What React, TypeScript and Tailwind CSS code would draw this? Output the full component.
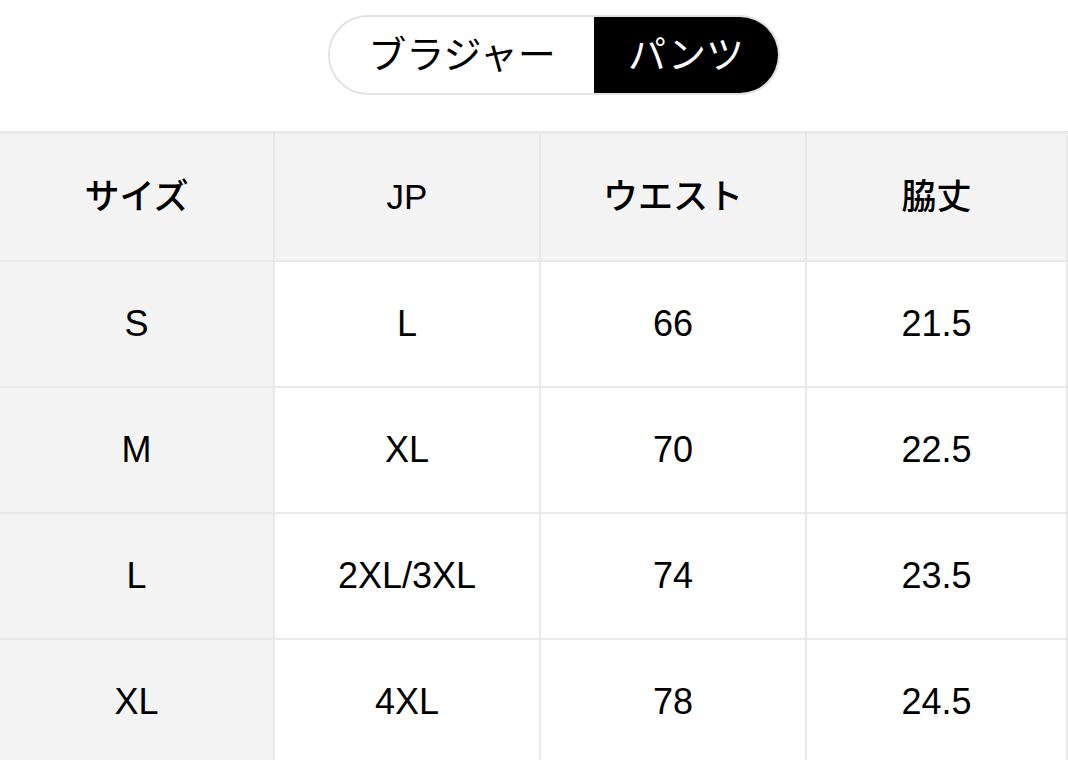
import { useState } from 'react';

type Row = { size: string; jp: string; waist: string; side: string };

const rows: Row[] = [
  { size: 'S', jp: 'L', waist: '66', side: '21.5' },
  { size: 'M', jp: 'XL', waist: '70', side: '22.5' },
  { size: 'L', jp: '2XL/3XL', waist: '74', side: '23.5' },
  { size: 'XL', jp: '4XL', waist: '78', side: '24.5' },
];

const font = { fontFamily: '"Liberation Sans", "Noto Sans CJK JP", sans-serif' };

export default function App() {
  const [tab, setTab] = useState<'bra' | 'pants'>('pants');

  const cell = 'flex items-center justify-center border-r-2 border-b-2 border-[#e9e9e9] text-black';
  const head = `${cell} h-[128px] bg-[#f4f4f4] text-[35px] font-medium`;
  const body = `${cell} h-[126px] text-[36px]`;

  return (
    <div className="w-[1068px] h-[760px] overflow-hidden bg-white" style={font}>
      <div className="flex justify-center pt-[15px] pl-[40px]">
        <div className="flex h-[80px] w-[452px] overflow-hidden rounded-full border-2 border-[#e2e2e2]">
          <button
            onClick={() => setTab('bra')}
            className={`w-[264px] text-[38px] ${tab === 'bra' ? 'bg-black text-white' : 'bg-white text-black'}`}
          >
            ブラジャー
          </button>
          <button
            onClick={() => setTab('pants')}
            className={`flex-1 text-[38px] ${tab === 'pants' ? 'bg-black text-white' : 'bg-white text-black'}`}
          >
            パンツ
          </button>
        </div>
      </div>

      <div className="mt-[36px] grid grid-cols-[275px_266px_266px_261px] border-t-[3px] border-[#e9e9e9]">
        <div className={head}>サイズ</div>
        <div className={head}>JP</div>
        <div className={head}>ウエスト</div>
        <div className={`${head} border-r-0`}>脇丈</div>
        {rows.map((r) => (
          <div key={r.size} className="contents">
            <div className={`${body} bg-[#f4f4f4]`}>{r.size}</div>
            <div className={body}>{r.jp}</div>
            <div className={body}>{r.waist}</div>
            <div className={`${body} border-r-0`}>{r.side}</div>
          </div>
        ))}
      </div>
    </div>
  );
}
